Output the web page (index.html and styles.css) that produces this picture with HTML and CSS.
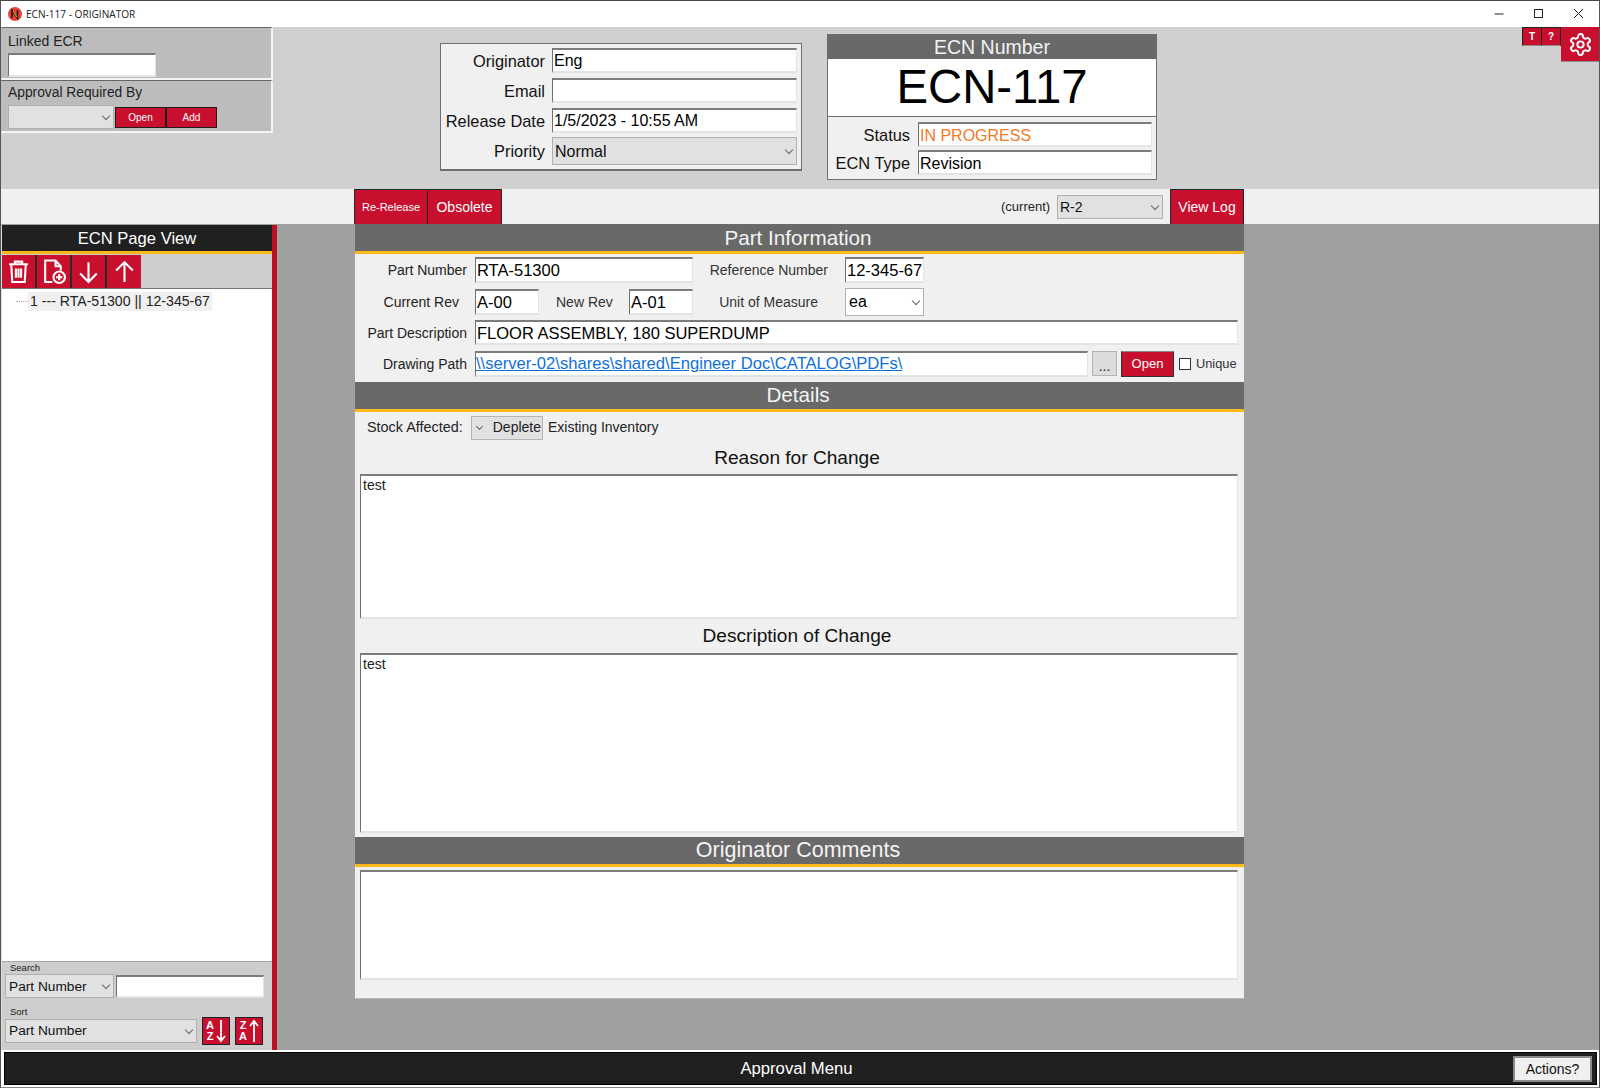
FILE: index.html
```html
<!DOCTYPE html>
<html lang="en">
<head>
<meta charset="utf-8">
<title>ECN-117 - ORIGINATOR</title>
<link rel="stylesheet" href="styles.css">
</head>
<body>
<div class="window">
  <header class="titlebar">
    <svg class="logo" viewBox="0 0 14 14"><circle cx="7" cy="7" r="7" fill="#e8413a"/><path d="M4 11V3.5L9.5 11V3" fill="none" stroke="#1a1a1a" stroke-width="1.6"/><path d="M5 4l4 6" stroke="#ffb81c" stroke-width="1"/></svg>
    <span class="title-text">ECN-117 - ORIGINATOR</span>
    <div class="win-controls">
      <svg class="win-btn" viewBox="0 0 40 26"><path d="M15.5 13h9" stroke="#222" fill="none"/></svg>
      <svg class="win-btn" viewBox="0 0 40 26"><rect x="15.5" y="8.5" width="8" height="8" stroke="#222" fill="none"/></svg>
      <svg class="win-btn" viewBox="0 0 40 26"><path d="M15 8l9 9M24 8l-9 9" stroke="#222" fill="none"/></svg>
    </div>
  </header>

  <section class="top">
    <div class="top-left">
      <div class="inset-panel linked">
        <div class="panel-label">Linked ECR</div>
        <div class="field linked-input"></div>
      </div>
      <div class="inset-panel approval">
        <div class="panel-label">Approval Required By</div>
        <div class="approval-row">
          <div class="select approval-select"></div>
          <div class="btn btn-tiny">Open</div>
          <div class="btn btn-tiny">Add</div>
        </div>
      </div>
    </div>

    <div class="orig-panel">
      <div class="orig-row"><span class="orig-label">Originator</span><div class="field orig-field">Eng</div></div>
      <div class="orig-row"><span class="orig-label">Email</span><div class="field orig-field"></div></div>
      <div class="orig-row"><span class="orig-label">Release Date</span><div class="field orig-field">1/5/2023 - 10:55 AM</div></div>
      <div class="orig-row"><span class="orig-label">Priority</span><div class="select orig-select">Normal</div></div>
    </div>

    <div class="ecn-panel">
      <div class="ecn-head">ECN Number</div>
      <div class="ecn-number">ECN-117</div>
      <div class="ecn-rows">
        <div class="ecn-row"><span class="ecn-label">Status</span><div class="field ecn-field status-text">IN PROGRESS</div></div>
        <div class="ecn-row"><span class="ecn-label">ECN Type</span><div class="field ecn-field">Revision</div></div>
      </div>
    </div>

    <div class="corner-tools">
      <div class="btn btn-corner">T</div>
      <div class="btn btn-corner">?</div>
      <div class="btn btn-gear">
        <svg viewBox="0 0 24 24" class="gear-icon"><path d="M12.22 2h-.44a2 2 0 0 0-2 2v.18a2 2 0 0 1-1 1.73l-.43.25a2 2 0 0 1-2 0l-.15-.08a2 2 0 0 0-2.73.73l-.22.38a2 2 0 0 0 .73 2.73l.15.1a2 2 0 0 1 1 1.72v.51a2 2 0 0 1-1 1.74l-.15.09a2 2 0 0 0-.73 2.73l.22.38a2 2 0 0 0 2.73.73l.15-.08a2 2 0 0 1 2 0l.43.25a2 2 0 0 1 1 1.73V20a2 2 0 0 0 2 2h.44a2 2 0 0 0 2-2v-.18a2 2 0 0 1 1-1.73l.43-.25a2 2 0 0 1 2 0l.15.08a2 2 0 0 0 2.73-.73l.22-.39a2 2 0 0 0-.73-2.73l-.15-.08a2 2 0 0 1-1-1.74v-.5a2 2 0 0 1 1-1.74l.15-.09a2 2 0 0 0 .73-2.73l-.22-.38a2 2 0 0 0-2.73-.73l-.15.08a2 2 0 0 1-2 0l-.43-.25a2 2 0 0 1-1-1.73V4a2 2 0 0 0-2-2z"/><circle cx="12" cy="12" r="3"/></svg>
      </div>
    </div>
  </section>

  <section class="toolbar">
    <div class="btn btn-tool btn-rerelease">Re-Release</div>
    <div class="btn btn-tool btn-obsolete">Obsolete</div>
    <span class="current-label">(current)</span>
    <div class="select rev-select">R-2</div>
    <div class="btn btn-tool btn-log">View Log</div>
  </section>

  <main class="main">
    <aside class="sidebar">
      <div class="side-head">ECN Page View</div>
      <div class="side-tools">
        <div class="btn btn-icon">
          <svg viewBox="0 0 24 24" class="tool-icon"><path d="M3 5h18M8.5 5V2.5h7V5M5 5l1 17h12l1-17M9.5 9v9M14.5 9v9M12 9v9"/></svg>
        </div>
        <div class="btn btn-icon">
          <svg viewBox="0 0 24 24" class="tool-icon"><path d="M11 22H4V1.5h10l5 5.5v4M14 1.5V7h5"/><circle cx="17.5" cy="17.5" r="5.5"/><path d="M17.5 14.5v6M14.5 17.5h6"/></svg>
        </div>
        <div class="btn btn-icon">
          <svg viewBox="0 0 24 24" class="tool-icon"><path d="M12 3v19M4 14l8 8 8-8"/></svg>
        </div>
        <div class="btn btn-icon">
          <svg viewBox="0 0 24 24" class="tool-icon"><path d="M12 22V3M4 11l8-8 8 8"/></svg>
        </div>
      </div>
      <div class="tree">
        <div class="tree-row"><span class="tree-dots"></span><span class="tree-item">1 --- RTA-51300 || 12-345-67</span></div>
      </div>
      <div class="side-bottom">
        <div class="mini-label">Search</div>
        <div class="search-row">
          <div class="select search-select">Part Number</div>
          <div class="field search-input"></div>
        </div>
        <div class="mini-label sort-label">Sort</div>
        <div class="sort-row">
          <div class="select sort-select">Part Number</div>
          <div class="btn btn-sort">
            <span class="sort-letters">A<br>Z</span>
            <svg viewBox="0 0 10 24" class="sort-arrow"><path d="M5 1v21M1 17l4 5 4-5"/></svg>
          </div>
          <div class="btn btn-sort">
            <span class="sort-letters">Z<br>A</span>
            <svg viewBox="0 0 10 24" class="sort-arrow"><path d="M5 23V2M1 7l4-5 4 5"/></svg>
          </div>
        </div>
      </div>
    </aside>

    <div class="card">
      <h2 class="section-head head-part">Part Information</h2>
      <div class="part-body">
        <div class="form-row row-a">
          <span class="form-label">Part Number</span>
          <div class="field w-part card-text">RTA-51300</div>
          <span class="form-label-sm ref-label">Reference Number</span>
          <div class="field w-ref card-text">12-345-67</div>
        </div>
        <div class="form-row row-b">
          <span class="form-label label-rev">Current Rev</span>
          <div class="field w-rev card-text">A-00</div>
          <span class="form-label-sm new-rev">New Rev</span>
          <div class="field w-rev card-text">A-01</div>
          <span class="form-label-sm uom-label">Unit of Measure</span>
          <div class="select w-ref uom-select">ea</div>
        </div>
        <div class="form-row row-c">
          <span class="form-label">Part Description</span>
          <div class="field w-fill card-text">FLOOR ASSEMBLY, 180 SUPERDUMP</div>
        </div>
        <div class="form-row row-d">
          <span class="form-label">Drawing Path</span>
          <div class="field w-path card-text path-field"><span class="path-link">\\server-02\shares\shared\Engineer Doc\CATALOG\PDFs\</span></div>
          <div class="btn-dots">...</div>
          <div class="btn btn-open">Open</div>
          <span class="checkbox"></span>
          <span class="unique-label">Unique</span>
        </div>
      </div>

      <h2 class="section-head">Details</h2>
      <div class="details-body">
        <div class="stock-row">
          <span class="stock-label">Stock Affected:</span>
          <div class="stock-select"><span class="stock-chev"></span><span>Deplete</span></div>
          <span class="stock-text">Existing Inventory</span>
        </div>
        <h3 class="sub-title sub-reason">Reason for Change</h3>
        <div class="textbox box-reason">test</div>
        <h3 class="sub-title sub-desc">Description of Change</h3>
        <div class="textbox box-desc">test</div>
      </div>

      <h2 class="section-head head-comments">Originator Comments</h2>
      <div class="comments-body">
        <div class="textbox box-comments"></div>
      </div>
    </div>
  </main>

  <footer class="footer">
    <div class="footer-bar">
      <span class="footer-title">Approval Menu</span>
      <div class="actions-btn">Actions?</div>
    </div>
  </footer>
</div>
</body>
</html>
```
FILE: styles.css
```css
* { box-sizing: border-box; }
html, body { margin: 0; padding: 0; }
body {
  width: 1600px;
  height: 1088px;
  overflow: hidden;
  font-family: "Liberation Sans", Arial, sans-serif;
  color: #111;
}
h2, h3 { margin: 0; font-weight: 400; }

.window {
  width: 1600px;
  height: 1088px;
  display: flex;
  flex-direction: column;
  border-top: 1px solid #444;
  border-left: 1px solid #555;
  border-right: 1px solid #555;
  background: #d0d0d0;
}

/* Title bar */
.titlebar {
  height: 26px;
  flex: none;
  background: #fff;
  display: flex;
  align-items: center;
  padding-left: 7px;
}
.logo { width: 14px; height: 14px; flex: none; }
.title-text { margin-left: 4px; font-size: 10.1px; color: #222; font-family: "Open Sans", sans-serif; }
.win-controls { margin-left: auto; display: flex; }
.win-btn { width: 40px; height: 26px; }

/* Shared controls */
.btn {
  background: #c8102e;
  color: #fff;
  display: flex;
  align-items: center;
  justify-content: center;
  flex: none;
}
.field {
  background: #fff;
  border-style: solid;
  border-width: 2px 1px 2px 1px;
  border-color: #7c7c7c #e4e4e4 #e4e4e4 #707070;
  font-size: 16px;
  color: #000;
  padding: 1px 0 0 1px;
  display: flex;
  align-items: center;
  white-space: nowrap;
  overflow: hidden;
  flex: none;
}
.select {
  position: relative;
  background: #e1e1e1;
  border: 1px solid #b0b0b0;
  font-size: 14px;
  color: #111;
  padding-left: 2px;
  display: flex;
  align-items: center;
  flex: none;
}
.select::after {
  content: "";
  position: absolute;
  right: 4px;
  top: 50%;
  width: 5px;
  height: 5px;
  margin-top: -4px;
  border-right: 1px solid #666;
  border-bottom: 1px solid #666;
  transform: rotate(45deg);
}

/* Top area */
.top {
  height: 162px;
  flex: none;
  display: flex;
  align-items: flex-start;
  background: #d0d0d0;
}
.top-left { width: 272px; flex: none; display: flex; flex-direction: column; }
.inset-panel {
  background: #bcbcbc;
  border-style: solid;
  border-width: 1px 2px 2px 1px;
  border-color: #666 #f4f4f4 #f4f4f4 #bcbcbc;
  padding-left: 6px;
  font-size: 14px;
}
.linked { height: 53px; }
.approval { height: 53px; }
.panel-label { font-size: 14px; line-height: 16px; padding-top: 5px; color: #222; }
.approval .panel-label { font-size: 13.8px; padding-top: 4px; }
.linked-input { width: 148px; height: 24px; margin-top: 4px; }
.approval-row { display: flex; align-items: center; margin-top: 4px; }
.approval-select { width: 106px; height: 24px; }
.btn-tiny { width: 51px; height: 21px; font-size: 10px; border: 1px solid #1d1d1d; }
.approval-select + .btn-tiny { margin-left: 1px; }

.orig-panel {
  width: 362px;
  height: 128px;
  margin: 16px 0 0 167px;
  background: #f0f0f0;
  border: 1px solid #6e6e6e;
  border-bottom-width: 2px;
  padding: 4px 4px 0 0;
  flex: none;
}
.orig-row { display: flex; align-items: center; height: 25px; margin-bottom: 5px; }
.orig-label { width: 104px; text-align: right; font-size: 16.4px; color: #111; flex: none; margin-right: 7px; padding-top: 1px; }
.orig-field { width: 245px; height: 25px; }
.orig-select { width: 245px; height: 28px; font-size: 16px; padding-top: 2px; }

.ecn-panel {
  width: 330px;
  height: 146px;
  margin: 7px 0 0 25px;
  background: #fff;
  border: 1px solid #6e6e6e;
  flex: none;
}
.ecn-head {
  height: 24px;
  background: #696969;
  color: #f2f2f2;
  font-size: 19.5px;
  line-height: 24px;
  text-align: center;
}
.ecn-number {
  height: 58px;
  font-size: 47.3px;
  line-height: 56px;
  text-align: center;
  color: #000;
  border-bottom: 1px solid #6e6e6e;
}
.ecn-rows { background: #f0f0f0; height: 62px; padding-top: 5px; }
.ecn-row { display: flex; align-items: center; height: 25px; margin-bottom: 3px; }
.ecn-label { width: 82px; text-align: right; font-size: 16.4px; margin-right: 8px; flex: none; padding-top: 1px; }
.ecn-field { width: 234px; height: 25px; padding-top: 2px; }
.status-text { color: #f47a1f; }

.corner-tools { margin-left: auto; display: flex; align-items: flex-start; }
.btn-corner {
  width: 20px;
  height: 19px;
  font-size: 10px;
  font-weight: 700;
  border: 1px solid #222;
  border-bottom-color: #8a8a8a;
  margin-left: -1px;
}
.btn-gear { width: 38px; height: 35px; border-bottom: 1px solid #8a8a8a; }
.gear-icon { width: 25px; height: 25px; fill: none; stroke: #fff; stroke-width: 1.9; }

/* Toolbar row */
.toolbar {
  height: 35px;
  flex: none;
  background: #f0f0f0;
  display: flex;
  align-items: center;
  padding-left: 353px;
}
.btn-tool { height: 35px; font-size: 14px; border: 1px solid #1f2a2a; border-bottom: 0; }
.btn-rerelease { width: 74px; font-size: 11px; }
.btn-obsolete { width: 74px; border-left: 0; }
.current-label { margin-left: 499px; font-size: 13px; color: #222; width: 56px; }
.rev-select { width: 106px; height: 24px; }
.btn-log { width: 74px; margin-left: 7px; }

/* Main area */
.main {
  flex: 1;
  min-height: 0;
  display: flex;
  align-items: flex-start;
  background: #a0a0a0;
}
.sidebar {
  width: 276px;
  height: calc(100% - 1px);
  flex: none;
  margin-top: 1px;
  display: flex;
  flex-direction: column;
  border-right: 5px solid #bd0f24;
  background: #cdcdcd;
  border-left: 1px solid #ddd;
}
.side-head {
  height: 26px;
  background: #202020;
  color: #fff;
  font-size: 16.6px;
  line-height: 28px;
  text-align: center;
  flex: none;
}
.side-tools {
  height: 37px;
  flex: none;
  border-top: 3px solid #ffb81c;
  padding-top: 1px;
  display: flex;
  background: #cdcdcd;
}
.btn-icon { width: 35px; height: 33px; border-right: 2px solid #2a2a2a; }
.btn-icon:last-child { width: 34px; border-right: 0; }
.tool-icon { width: 25px; height: 25px; fill: none; stroke: #fff; stroke-width: 2; }
.tree {
  flex: 1;
  min-height: 0;
  background: #fff;
  border-top: 1px solid #777;
  padding-top: 3px;
}
.tree-row { display: flex; align-items: center; height: 19px; padding-left: 14px; }
.tree-dots { width: 12px; border-top: 1px dotted #c8a0a0; flex: none; }
.tree-item { background: #f0f0f0; font-size: 14.1px; line-height: 19px; color: #222; padding: 0 2px; width: 184px; }
.side-bottom {
  height: 89px;
  flex: none;
  background: #cdcdcd;
  border-top: 1px solid #a8a8a8;
  padding-left: 3px;
}
.mini-label { font-size: 9.5px; line-height: 11px; padding-left: 5px; color: #222; }
.search-row { display: flex; align-items: center; margin-top: 1px; }
.search-select { width: 109px; height: 24px; font-size: 13.7px; padding-left: 3px; }
.search-input { width: 148px; height: 23px; margin-left: 2px; }
.sort-label { margin-top: 8px; }
.sort-row { display: flex; align-items: center; }
.sort-select { width: 192px; height: 24px; font-size: 13.7px; padding: 0 0 2px 3px; }
.btn-sort { width: 28px; height: 28px; border: 1px solid #222; margin-left: 5px; gap: 2px; }
.sort-letters { font-size: 11px; line-height: 11px; font-weight: 700; text-align: center; }
.sort-arrow { width: 10px; height: 24px; fill: none; stroke: #fff; stroke-width: 1.8; }

/* Card */
.card {
  width: 889px;
  height: 775px;
  margin-left: 78px;
  flex: none;
  background: #f0f0f0;
  border-bottom: 1px solid #b8b8b8;
}
.section-head {
  height: 30px;
  background: #696969;
  color: #f4f4f4;
  font-size: 20.7px;
  line-height: 26px;
  text-align: center;
  padding-right: 3px;
  border-bottom: 3px solid #ffb81c;
}
.head-part { line-height: 27px; }
.head-comments { font-size: 21.5px; }
.part-body { height: 128px; padding-top: 3px; }
.form-row { display: flex; align-items: center; }
.row-a { height: 26px; }
.row-b { height: 28px; margin-top: 5px; }
.row-c { height: 25px; margin-top: 4px; }
.row-d { height: 27px; margin-top: 5px; }
.form-label { width: 112px; margin-right: 8px; text-align: right; font-size: 14px; color: #222; flex: none; }
.label-rev { padding-right: 8px; }
.form-label-sm { font-size: 14px; color: #333; flex: none; }
.ref-label { width: 152px; padding-right: 17px; text-align: right; }
.new-rev { width: 90px; padding-left: 17px; }
.uom-label { width: 152px; padding-right: 27px; text-align: right; }
.card-text { font-size: 16.5px; }
.path-field { font-size: 16.6px; padding-left: 0; }
.w-part { width: 218px; height: 26px; }
.w-ref { width: 79px; height: 26px; }
.uom-select { height: 28px; background: #fff; font-size: 16px; color: #000; padding-left: 3px; }
.w-rev { width: 64px; height: 26px; }
.w-fill { width: 763px; height: 25px; }
.w-path { width: 613px; height: 26px; }
.path-link { color: #0f6fde; text-decoration: underline; text-underline-offset: 1px; }
.btn-dots {
  width: 25px;
  height: 25px;
  margin-left: 4px;
  background: #dcdcdc;
  border: 1px solid #b4b4b4;
  font-size: 14px;
  text-align: center;
  line-height: 28px;
  color: #222;
  flex: none;
}
.btn-open { width: 53px; height: 26px; margin-left: 4px; font-size: 13px; border: 1px solid #333; border-top-color: #888; }
.checkbox { width: 12px; height: 12px; margin-left: 5px; background: #fff; border: 1px solid #333; flex: none; }
.unique-label { margin-left: 5px; font-size: 12.8px; color: #333; }

.details-body { height: 425px; padding: 4px 6px 0 5px; }
.stock-row { display: flex; align-items: center; height: 24px; padding-left: 7px; font-size: 14px; color: #222; }
.stock-label { width: 104px; flex: none; font-size: 14.4px; margin-bottom: 2px; }
.stock-select {
  width: 72px;
  height: 24px;
  background: #e1e1e1;
  border: 1px solid #b4b4b4;
  display: flex;
  align-items: center;
  justify-content: space-between;
  padding: 0 1px 2px 5px;
  flex: none;
}
.stock-chev { width: 5px; height: 5px; margin-top: -1px; border-right: 1px solid #666; border-bottom: 1px solid #666; transform: rotate(45deg); }
.stock-text { margin-left: 5px; margin-bottom: 2px; }
.sub-title { text-align: center; font-size: 19.1px; color: #111; padding-right: 4px; }
.sub-reason { height: 34px; line-height: 36px; }
.sub-desc { height: 34px; line-height: 34px; }
.textbox {
  background: #fff;
  border-style: solid;
  border-width: 2px 1px 2px 1px;
  border-color: #7c7c7c #e4e4e4 #e4e4e4 #707070;
  font-size: 14px;
  line-height: 16px;
  padding: 1px 0 0 2px;
  color: #222;
}
.box-reason { height: 145px; }
.box-desc { height: 180px; }
.comments-body { padding: 3px 6px 0 5px; }
.box-comments { height: 110px; }

/* Footer */
.footer {
  height: 38px;
  flex: none;
  background: #fff;
  border-bottom: 1px solid #888;
  padding: 2px 2px 2px 3px;
}
.footer-bar {
  height: 33px;
  background: #202020;
  border: 1px solid #000;
  display: flex;
  align-items: center;
  padding-right: 4px;
}
.footer-title { flex: 1; text-align: center; color: #fff; font-size: 16.7px; padding-left: 75px; padding-top: 1px; }
.actions-btn {
  width: 79px;
  height: 26px;
  background: #f0f0f0;
  border: 2px solid #8a8a8a;
  font-size: 14px;
  text-align: center;
  line-height: 23px;
  color: #111;
  flex: none;
}
```
